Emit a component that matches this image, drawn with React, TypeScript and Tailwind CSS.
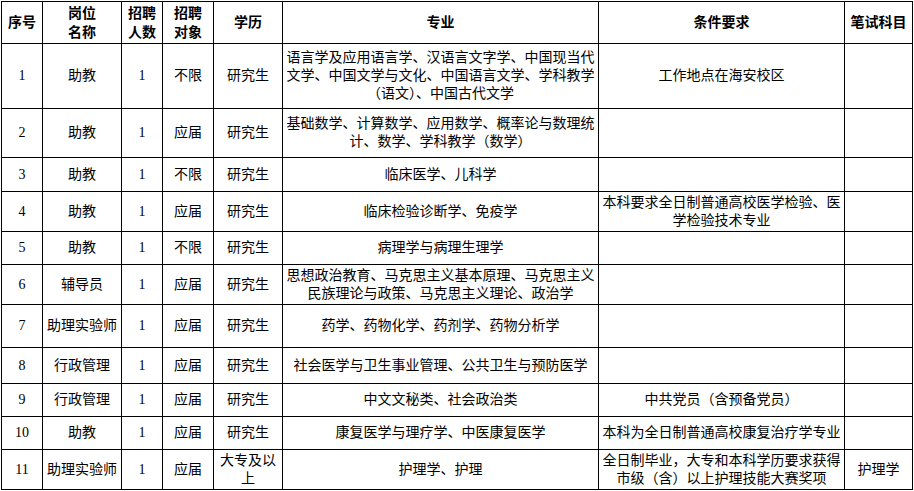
const rows: { h: string; cells: string[] }[] = [
  { h: 'h-[65px]', cells: ['1', '助教', '1', '不限', '研究生', '语言学及应用语言学、汉语言文字学、中国现当代文学、中国文学与文化、中国语言文学、学科教学（语文）、中国古代文学', '工作地点在海安校区', ''] },
  { h: 'h-[49px]', cells: ['2', '助教', '1', '应届', '研究生', '基础数学、计算数学、应用数学、概率论与数理统计、数学、学科教学（数学）', '', ''] },
  { h: 'h-[34px]', cells: ['3', '助教', '1', '不限', '研究生', '临床医学、儿科学', '', ''] },
  { h: 'h-[40px]', cells: ['4', '助教', '1', '应届', '研究生', '临床检验诊断学、免疫学', '本科要求全日制普通高校医学检验、医学检验技术专业', ''] },
  { h: 'h-[33px]', cells: ['5', '助教', '1', '不限', '研究生', '病理学与病理生理学', '', ''] },
  { h: 'h-[40px]', cells: ['6', '辅导员', '1', '应届', '研究生', '思想政治教育、马克思主义基本原理、马克思主义民族理论与政策、马克思主义理论、政治学', '', ''] },
  { h: 'h-[43px]', cells: ['7', '助理实验师', '1', '应届', '研究生', '药学、药物化学、药剂学、药物分析学', '', ''] },
  { h: 'h-[36px]', cells: ['8', '行政管理', '1', '应届', '研究生', '社会医学与卫生事业管理、公共卫生与预防医学', '', ''] },
  { h: 'h-[33px]', cells: ['9', '行政管理', '1', '应届', '研究生', '中文文秘类、社会政治类', '中共党员（含预备党员）', ''] },
  { h: 'h-[33px]', cells: ['10', '助教', '1', '应届', '研究生', '康复医学与理疗学、中医康复医学', '本科为全日制普通高校康复治疗学专业', ''] },
  { h: 'h-[40px]', cells: ['11', '助理实验师', '1', '应届', '大专及以上', '护理学、护理', '全日制毕业，大专和本科学历要求获得市级（含）以上护理技能大赛奖项', '护理学'] },
];

const headers: string[][] = [
  ['序号'], ['岗位', '名称'], ['招聘', '人数'], ['招聘', '对象'], ['学历'], ['专业'], ['条件要求'], ['笔试科目'],
];

const widths = ['w-[41px]', 'w-[79px]', 'w-[41px]', 'w-[51px]', 'w-[69px]', 'w-[316px]', 'w-[246px]', 'w-[68px]'];

export default function App() {
  return (
    <div className="bg-white w-[914px] h-[491px] pt-px pl-px text-black text-[14px] font-['Liberation_Serif','Noto_Sans_CJK_SC',serif]">
      <table className="table-fixed border-collapse w-[911px]">
        <colgroup>
          {widths.map((w, i) => <col key={i} className={w} />)}
        </colgroup>
        <thead>
          <tr className="h-[42px]">
            {headers.map((lines, i) => (
              <th key={i} className="border border-black px-[2px] text-center align-middle font-bold leading-[19px]">
                {lines.map((l, j) => (
                  <div key={j}>{l}</div>
                ))}
              </th>
            ))}
          </tr>
        </thead>
        <tbody>
          {rows.map((r, i) => (
            <tr key={i} className={r.h}>
              {r.cells.map((c, j) => (
                <td key={j} className="border border-black px-[3px] py-0 text-center align-middle leading-[18px] break-all">
                  {c}
                </td>
              ))}
            </tr>
          ))}
        </tbody>
      </table>
    </div>
  );
}
